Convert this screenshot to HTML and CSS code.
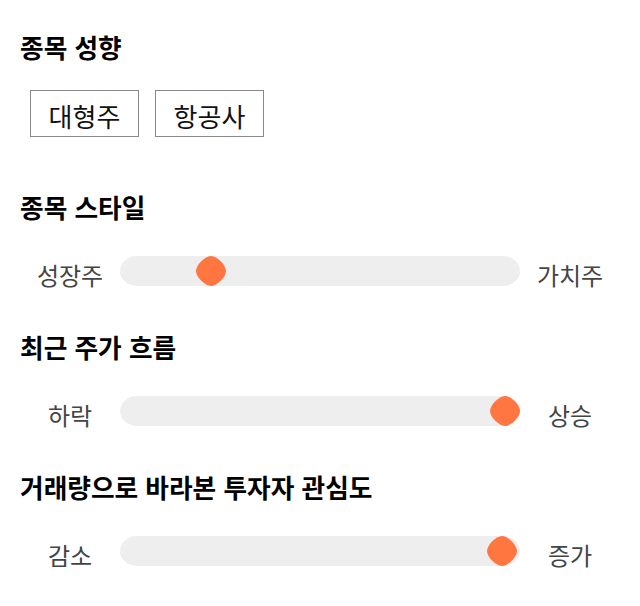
FILE: index.html
```html
<!DOCTYPE html>
<html lang="ko">
<head>
<meta charset="utf-8">
<title>종목 필터</title>
<link rel="stylesheet" href="styles.css">
</head>
<body>
<main class="page">
  <section class="group group-chips">
    <h2 class="title">종목 성향</h2>
    <div class="chips">
      <span class="chip">대형주</span>
      <span class="chip">항공사</span>
    </div>
  </section>

  <section class="group group-slider">
    <h2 class="title">종목 스타일</h2>
    <div class="slider-row">
      <span class="end">성장주</span>
      <div class="track">
        <svg class="thumb" style="left:76px" viewBox="0 0 30 30" width="30" height="30"><path d="M15 0C21 0 30 9 30 15C30 21 21 30 15 30C9 30 0 21 0 15C0 9 9 0 15 0Z"/></svg>
      </div>
      <span class="end">가치주</span>
    </div>
  </section>

  <section class="group group-slider">
    <h2 class="title">최근 주가 흐름</h2>
    <div class="slider-row">
      <span class="end">하락</span>
      <div class="track">
        <svg class="thumb" style="left:370px" viewBox="0 0 30 30" width="30" height="30"><path d="M15 0C21 0 30 9 30 15C30 21 21 30 15 30C9 30 0 21 0 15C0 9 9 0 15 0Z"/></svg>
      </div>
      <span class="end">상승</span>
    </div>
  </section>

  <section class="group group-slider">
    <h2 class="title">거래량으로 바라본 투자자 관심도</h2>
    <div class="slider-row">
      <span class="end">감소</span>
      <div class="track">
        <svg class="thumb" style="left:367px" viewBox="0 0 30 30" width="30" height="30"><path d="M15 0C21 0 30 9 30 15C30 21 21 30 15 30C9 30 0 21 0 15C0 9 9 0 15 0Z"/></svg>
      </div>
      <span class="end">증가</span>
    </div>
  </section>
</main>
</body>
</html>
```

FILE: styles.css
```css
* { box-sizing: border-box; }

html, body {
  margin: 0;
  padding: 0;
  background: #ffffff;
}

body {
  font-family: "Noto Sans CJK KR", "Noto Sans", sans-serif;
  color: #111111;
}

.page {
  display: flex;
  flex-direction: column;
  padding: 32px 20px 0 20px;
}

.group {
  display: flex;
  flex-direction: column;
}

.group-chips { padding-bottom: 55px; }
.group-slider { padding-bottom: 46px; }

.title {
  margin: 0;
  font-size: 25.7px;
  line-height: 30px;
  font-weight: 700;
  color: #000000;
}

.chips {
  display: flex;
  gap: 16px;
  margin-top: 28px;
  padding-left: 10px;
}

.chip {
  display: flex;
  align-items: center;
  justify-content: center;
  width: 109px;
  height: 47px;
  border: 1px solid #888888;
  font-size: 26px;
  color: #111111;
  padding-top: 3px;
}

.slider-row {
  display: flex;
  align-items: center;
  margin-top: 34px;
}

.end {
  width: 100px;
  text-align: center;
  font-size: 24px;
  line-height: 30px;
  color: #444444;
  padding-top: 4px;
  margin-bottom: -4px;
}

.track {
  position: relative;
  width: 400px;
  height: 30px;
  background: #eeeeee;
  border-radius: 17px / 15px;
}

.thumb {
  position: absolute;
  top: 0;
  display: block;
}

.thumb path { fill: #ff7640; }
```
